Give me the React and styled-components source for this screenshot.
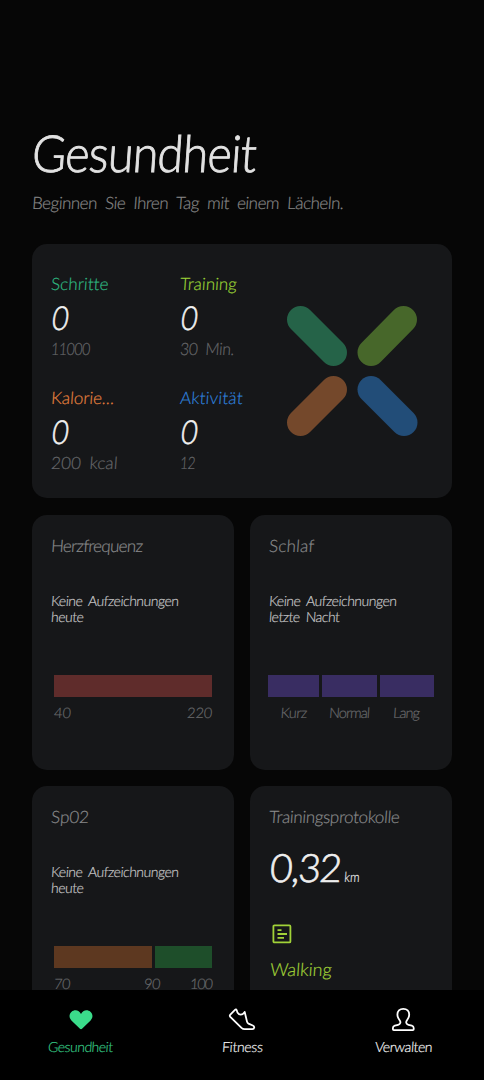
import React from "react";
import styled, { createGlobalStyle, css } from "styled-components";

const GlobalStyle = createGlobalStyle`
  * { box-sizing: border-box; }
  body { margin: 0; background: #060606; }
`;

const type = css`
  font-family: Lato, "Open Sans", sans-serif;
  font-weight: 300;
  font-variant-ligatures: none;
  -webkit-text-stroke: 0.2px currentColor;
  white-space: nowrap;
`;

const Screen = styled.div`
  ${type}
  display: flex;
  flex-direction: column;
  height: 1080px;
  width: 484px;
  overflow: hidden;
  background: #060606;
  color: #e2e2e2;
`;

const Content = styled.main`
  flex: 1;
  min-height: 0;
  overflow: hidden;
  padding: 124px 32px 0;
`;

const Text = styled.span`
  display: inline-block;
  transform: skewX(${(p) => p.$skew ?? -4}deg) scaleX(${(p) => p.$x || 1});
  transform-origin: 0 60%;
  letter-spacing: ${(p) => p.$ls || 0}px;
  word-spacing: ${(p) => p.$ws || 0}px;
`;

const Title = styled.h1`
  margin: 0;
  font-size: 51px;
  font-weight: 300;
  line-height: 58px;
  -webkit-text-stroke-width: 0.9px;
`;

const Subtitle = styled.p`
  margin: 10px 0 0;
  font-size: 17px;
  line-height: 22px;
  color: #858585;
`;

const Card = styled.section`
  background: #161719;
  border-radius: 15px;
  padding: ${(p) => p.$pad || "19px 18px 0 19px"};
  height: ${(p) => p.$h || 255}px;
`;

const Summary = styled(Card)`
  display: flex;
  margin-top: 30px;
`;

const Metrics = styled.div`
  display: grid;
  grid-template-columns: 129px 106px;
  grid-auto-rows: 114px;
`;

const MetricLabel = styled.div`
  font-size: 17px;
  line-height: 24px;
  color: ${(p) => p.$color};
`;

const MetricValue = styled.div`
  font-size: 33px;
  line-height: 42px;
  margin-bottom: 2px;
  padding-left: 1px;
  color: #f1f1f1;
  -webkit-text-stroke-width: 0.6px;
`;

const Goal = styled.div`
  font-size: 17px;
  line-height: 18px;
  color: #66676a;
`;

const Cross = styled.svg`
  display: block;
  margin-top: 34px;
`;

const Grid = styled.div`
  display: grid;
  grid-template-columns: 202px 202px;
  gap: 16px;
  margin-top: 17px;
`;

const CardTitle = styled.h2`
  margin: 0;
  font-size: 17px;
  font-weight: 300;
  line-height: 24px;
  color: #88898a;
`;

const NoteBox = styled.p`
  display: flex;
  flex-direction: column;
  align-items: flex-start;
  margin: 35px 0 0;
  font-size: 14px;
  line-height: 16px;
  height: 82px;
  color: #c4c4c5;
`;

const Bars = styled.div`
  display: grid;
  grid-template-columns: ${(p) => p.$cols};
  gap: 3px;
  height: 21.5px;
  margin: ${(p) => p.$margin};
`;

const Bar = styled.div`
  background: ${(p) => p.$color};
`;

const Scale = styled.div`
  display: grid;
  grid-template-columns: ${(p) => p.$cols};
  margin: ${(p) => p.$margin};
  font-size: 14.5px;
  line-height: 20px;
  color: #68696b;
  text-align: ${(p) => p.$align || "left"};
`;

const Distance = styled.div`
  display: flex;
  align-items: baseline;
  height: 52px;
  margin-top: 12px;
  padding-left: 1px;
  font-size: 39px;
  line-height: 52px;
  color: #eeeeee;
  -webkit-text-stroke-width: 0.7px;
`;

const Unit = styled.small`
  font-size: 14px;
  margin-left: 4px;
  -webkit-text-stroke-width: 0.2px;
`;

const LogIcon = styled.svg`
  display: block;
  margin: 31px 0 0 3px;
`;

const Activity = styled.div`
  margin: 12px 0 0 1px;
  font-size: 18px;
  line-height: 26px;
  color: #a1d238;
`;

const Nav = styled.nav`
  display: grid;
  grid-template-columns: repeat(3, 161.33px);
  height: 90px;
  background: #000;
`;

const Tab = styled.div`
  display: flex;
  flex-direction: column;
  align-items: center;
  padding-top: 15px;
  font-size: 14px;
  line-height: 20px;
  color: ${(p) => p.$color || "#f2f2f2"};
  svg { margin-bottom: 2px; }
`;

const metrics = [
  { name: "Schritte", goal: "11000", color: "#2fb981", ls: 0.1, goalLs: -0.5, goalX: 0.83 },
  { name: "Training", goal: "30 Min.", color: "#9bd336", ls: 0, goalLs: -0.3, goalX: 0.92 },
  { name: "Kalorie…", goal: "200 kcal", color: "#e5813e", ls: 0, goalLs: 0.1, goalX: 1 },
  { name: "Aktivität", goal: "12", color: "#2f80dc", ls: 0.2, goalLs: -0.5, goalX: 0.8 },
];

function Note({ lines }) {
  return (
    <NoteBox>
      {lines.map((line) => (
        <Text key={line} $ls={-0.5} $ws={3}>{line}</Text>
      ))}
    </NoteBox>
  );
}

export default function App() {
  return (
    <Screen>
      <GlobalStyle />
      <Content>
        <Title><Text $ls={-0.8} $x={0.913}>Gesundheit</Text></Title>
        <Subtitle><Text $ls={-0.5} $ws={4}>Beginnen Sie Ihren Tag mit einem Lächeln.</Text></Subtitle>

        <Summary $h={254} $pad="28px 0 0 19px">
          <Metrics>
            {metrics.map((m) => (
              <div key={m.name}>
                <MetricLabel $color={m.color}><Text $ls={m.ls}>{m.name}</Text></MetricLabel>
                <MetricValue><Text $x={0.86} $skew={-8}>0</Text></MetricValue>
                <Goal><Text $ls={m.goalLs} $x={m.goalX} $ws={4}>{m.goal}</Text></Goal>
              </div>
            ))}
          </Metrics>
          <Cross width="132" height="132" viewBox="0 0 132 132" strokeWidth="27" strokeLinecap="round">
            <path d="M14.5 13.5 47.5 46.5" stroke="#256348" />
            <path d="M117.5 13.5 85 46.5" stroke="#47672a" />
            <path d="M14.5 116.5 47.5 83.5" stroke="#74482b" />
            <path d="M85 83.5 118 116.5" stroke="#224d78" />
          </Cross>
        </Summary>

        <Grid>
          <Card>
            <CardTitle><Text $ls={-0.7}>Herzfrequenz</Text></CardTitle>
            <Note lines={["Keine Aufzeichnungen", "heute"]} />
            <Bars $cols="1fr" $margin="0 4px 0 3px"><Bar $color="#5f2c2b" /></Bars>
            <Scale $cols="1fr auto" $margin="6px 4px 0 3px">
              <Text>40</Text><Text>220</Text>
            </Scale>
          </Card>
          <Card>
            <CardTitle><Text $ls={0.2}>Schlaf</Text></CardTitle>
            <Note lines={["Keine Aufzeichnungen", "letzte Nacht"]} />
            <Bars $cols="51px 55px 54px" $margin="0 0 0 -1px">
              <Bar $color="#392d62" /><Bar $color="#392d62" /><Bar $color="#392d62" />
            </Bars>
            <Scale $cols="51px 60px 54px" $margin="6px 0 0 -1px" $align="center">
              <Text $ls={-0.6}>Kurz</Text><Text $ls={-1}>Normal</Text><Text $ls={-0.9}>Lang</Text>
            </Scale>
          </Card>
          <Card>
            <CardTitle><Text>Sp02</Text></CardTitle>
            <Note lines={["Keine Aufzeichnungen", "heute"]} />
            <Bars $cols="98px 57px" $margin="0 4px 0 3px">
              <Bar $color="#5d3820" /><Bar $color="#1e4e2a" />
            </Bars>
            <Scale $cols="90px 1fr auto" $margin="6px 4px 0 3px">
              <Text $ls={-0.5}>70</Text><Text $ls={-0.5}>90</Text><Text $ls={-1.2}>100</Text>
            </Scale>
          </Card>
          <Card>
            <CardTitle><Text $ls={-0.35}>Trainingsprotokolle</Text></CardTitle>
            <Distance><Text $ls={-1.5}>0,32</Text><Unit><Text $x={0.85}>km</Text></Unit></Distance>
            <LogIcon width="20" height="20" viewBox="0 0 20 20" fill="none" stroke="#a1d238" strokeWidth="1.8">
              <rect x="1.4" y="1.4" width="17" height="17" rx="1" />
              <path d="M5.500 6.200h4M5.500 10h9.500M5.500 13.800h6.500" />
            </LogIcon>
            <Activity><Text>Walking</Text></Activity>
          </Card>
        </Grid>
      </Content>

      <Nav>
        <Tab $color="#35c583">
          <svg width="30" height="30" viewBox="0 0 30 30">
            <path d="M15 9c-1.7-4.2-6.6-4.9-9.4-2.3-2.8 2.600-2.600 6.200-.2 8.700l8.300 8.200q1.300 1.200 2.600 0l8.300-8.200c2.400-2.500 2.600-6.100-.2-8.700C21.600 4.100 16.700 4.800 15 9z" fill="#3bdc8b" />
          </svg>
          <Text $ls={-0.5}>Gesundheit</Text>
        </Tab>
        <Tab>
          <svg width="30" height="30" viewBox="0 0 30 30" fill="none" stroke="#fff" strokeWidth="1.8" strokeLinejoin="round" strokeLinecap="round">
            <path d="M8 4.800 3.300 9.600q-1 1.200 0 2.300l11.200 11q1.400 1.300 3.200 1.300h7.600c2.300 0 2.600-2.800.5-3.700l-4.300-1.900q-1.200-.6-1.500-2L17.700 7c-1.400 2.100-3.600 3.100-5.800 2.200Q10.200 8.500 9.700 5.200 8.900 4 8 4.800z" />
          </svg>
          <Text $ls={-0.3}>Fitness</Text>
        </Tab>
        <Tab>
          <svg width="30" height="30" viewBox="0 0 30 30" fill="none" stroke="#fff" strokeWidth="1.800" strokeLinejoin="round">
            <path d="M15.300 3.800c-3.700 0-5.900 2.500-5.900 5.800 0 2.200 1 4.100 2.200 5.700 1.500 2 .8 3.900-1.500 4.500l-3.300.9Q4.900 21.300 4.900 23v1.300q0 .9.900.9h19q.9 0 .9-.9V23q0-1.700-1.900-2.300l-3.300-.9c-2.300-.6-3-2.500-1.500-4.500 1.200-1.600 2.200-3.500 2.200-5.700 0-3.300-2.200-5.800-5.900-5.800z" />
          </svg>
          <Text $ls={-0.4}>Verwalten</Text>
        </Tab>
      </Nav>
    </Screen>
  );
}
